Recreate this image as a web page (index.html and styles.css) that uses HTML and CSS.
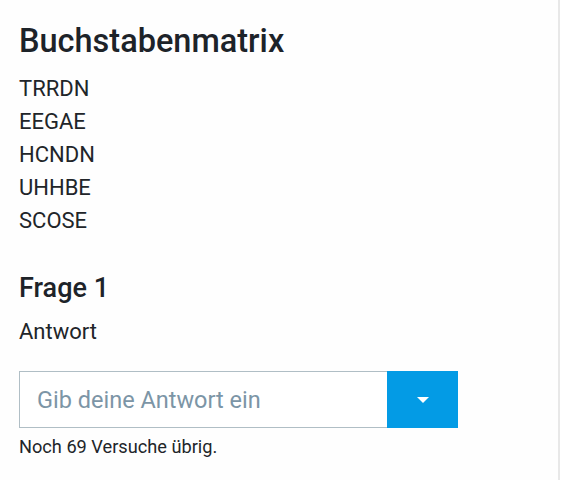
FILE: index.html
```html
<!DOCTYPE html>
<html lang="de">
<head>
<meta charset="utf-8">
<link rel="stylesheet" href="styles.css">
</head>
<body>
<main class="panel">
  <h1 class="title">Buchstabenmatrix</h1>
  <div class="matrix">
    <div>TRRDN</div>
    <div>EEGAE</div>
    <div>HCNDN</div>
    <div>UHHBE</div>
    <div>SCOSE</div>
  </div>
  <h2 class="question">Frage 1</h2>
  <div class="label">Antwort</div>
  <div class="answer">
    <input class="answer-input" type="text" placeholder="Gib deine Antwort ein">
    <button class="answer-btn" type="button" aria-label="Auswahl">
      <svg width="12" height="6" viewBox="0 0 12 6"><path d="M0 0H12L6 6Z" fill="#fff"/></svg>
    </button>
  </div>
  <div class="hint">Noch 69 Versuche übrig.</div>
</main>
</body>
</html>
```
FILE: styles.css
```css
html, body {
  margin: 0;
  padding: 0;
  background: #ffffff;
}
body {
  font-family: Roboto, "Noto Sans", sans-serif;
  color: #212529;
}
.panel {
  width: 560px;
  height: 480px;
  box-sizing: border-box;
  padding: 22px 0 0 19px;
  border-right: 2px solid #e8e8e8;
  background: #fefefe;
}
.title {
  margin: 0 0 12px;
  font-size: 32.5px;
  line-height: 38px;
  font-weight: 500;
  color: #1d2329;
}
.matrix {
  font-size: 22px;
  line-height: 33px;
}
.question {
  margin: 34px 0 0;
  font-size: 27px;
  line-height: 34px;
  font-weight: 500;
  color: #1d2329;
}
.label {
  margin-top: 10px;
  font-size: 22px;
  line-height: 33px;
}
.answer {
  display: flex;
  margin-top: 23px;
  width: 439px;
  height: 57px;
}
.answer-input {
  flex: 1;
  min-width: 0;
  box-sizing: border-box;
  height: 57px;
  margin: 0;
  border: 1px solid #b0bec5;
  border-right: none;
  padding: 0 0 0 17px;
  font-family: Roboto, sans-serif;
  font-size: 23.5px;
  color: #212529;
  background: #fff;
  outline: none;
}
.answer-input::placeholder {
  color: #7c95a6;
}
.answer-btn {
  width: 71px;
  height: 57px;
  margin: 0;
  padding: 0;
  border: none;
  background: #039be5;
  display: flex;
  align-items: center;
  justify-content: center;
}
.answer-btn svg {
  display: block;
}
.hint {
  margin-top: 5px;
  font-size: 18.2px;
  line-height: 27px;
}
```
